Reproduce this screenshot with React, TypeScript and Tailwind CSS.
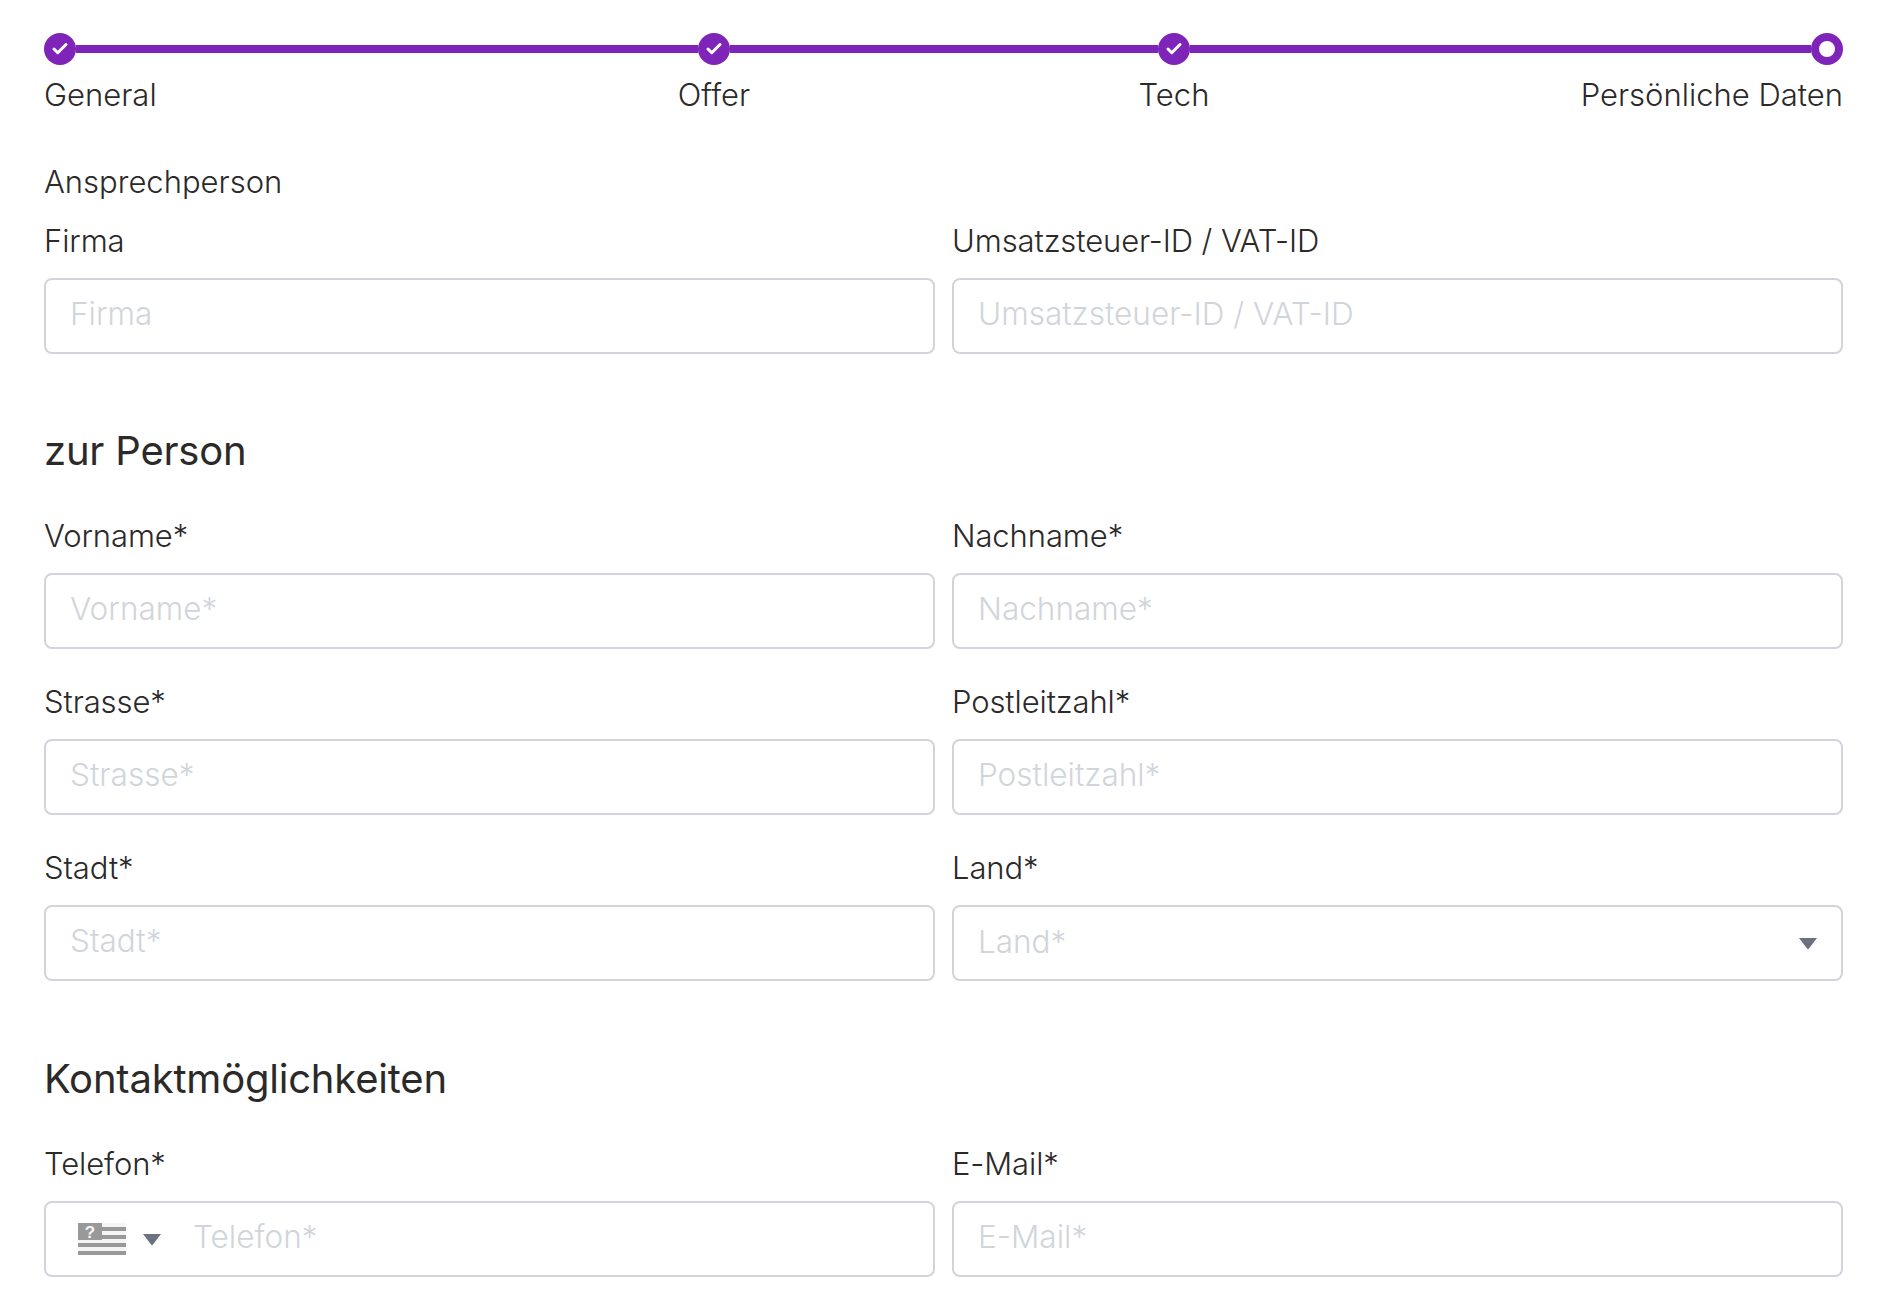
import { Check } from "lucide-react";

function Field({ label, children }: { label: string; children?: React.ReactNode }) {
  return (
    <div className="flex flex-col">
      <label className="h-[36px] text-[31px] leading-[36px] font-light tracking-[-0.1px] text-[#2c2929]">
        {label}
      </label>
      {children ?? <TextInput placeholder={label} />}
    </div>
  );
}

function TextInput({ placeholder }: { placeholder: string }) {
  return (
    <input
      placeholder={placeholder}
      className="mt-[19px] h-[76px] w-full rounded-lg border-2 border-[#d1d5db] px-6 pb-[5px] text-[31.5px] font-light outline-none placeholder:text-[#d1d5db]"
    />
  );
}

function Caret() {
  return (
    <svg width="18" height="11" viewBox="0 0 18 11" className="shrink-0">
      <path d="M0 0h18L10 10.4a1.3 1.3 0 0 1-2 0z" fill="#6b7280" />
    </svg>
  );
}

function UnknownFlag() {
  return (
    <svg width="48" height="32" viewBox="0 0 48 32" className="shrink-0">
      <rect width="48" height="32" fill="#f5f5f5" />
      <rect y="4" width="48" height="4" fill="#999" />
      <rect y="12" width="48" height="4" fill="#999" />
      <rect y="20" width="48" height="4" fill="#999" />
      <rect y="28" width="48" height="4" fill="#999" />
      <rect width="24" height="17" fill="#999" />
      <text x="12" y="14.5" textAnchor="middle" fontSize="17" fontWeight="700" fontFamily="Liberation Sans, sans-serif" fill="#f5f5f5">
        ?
      </text>
    </svg>
  );
}

function StepDot({ active }: { active?: boolean }) {
  if (active) {
    return <div className="size-8 shrink-0 rounded-full border-[8px] border-[#7e24b9] bg-white" />;
  }
  return (
    <div className="flex size-8 shrink-0 items-center justify-center rounded-full bg-[#7e24b9]">
      <Check className="size-[18px] text-white" strokeWidth={4} />
    </div>
  );
}

export default function App() {
  return (
    <div className="h-[1310px] overflow-hidden bg-white pt-[33px] pr-[41px] pl-[44px] font-['Inter',sans-serif]">
      <div className="flex items-center">
        <StepDot />
        <div className="h-2 w-[622px] bg-[#7e24b9]" />
        <StepDot />
        <div className="h-2 w-[428px] bg-[#7e24b9]" />
        <StepDot />
        <div className="h-2 flex-1 bg-[#7e24b9]" />
        <StepDot active />
      </div>
      <div className="mt-[12px] flex h-[36px] text-[31px] leading-[36px] font-light text-[#2c2929]">
        <span className="w-[570px]">General</span>
        <span className="w-[200px] text-center">Offer</span>
        <span className="ml-[260px] w-[200px] text-center">Tech</span>
        <span className="flex-1 text-right">Persönliche Daten</span>
      </div>

      <h3 className="mt-[51px] h-[36px] text-[31px] leading-[36px] font-light text-[#2c2929]">
        Ansprechperson
      </h3>
      <div className="mt-[23px] grid grid-cols-2 gap-x-[17px]">
        <Field label="Firma" />
        <Field label="Umsatzsteuer-ID / VAT-ID" />
      </div>

      <h2 className="mt-[72px] h-[50px] text-[40px] leading-[50px] font-normal tracking-[-0.2px] text-[#2c2929]">
        zur Person
      </h2>
      <div className="mt-[42px] grid grid-cols-2 gap-x-[17px] gap-y-[35px]">
        <Field label="Vorname*" />
        <Field label="Nachname*" />
        <Field label="Strasse*" />
        <Field label="Postleitzahl*" />
        <Field label="Stadt*" />
        <Field label="Land*">
          <div className="mt-[19px] flex h-[76px] items-center justify-between rounded-lg border-2 border-[#d1d5db] pr-[24px] pl-6 text-[31.5px] font-light text-[#d1d5db]">
            <span className="pb-[3px]">Land*</span>
            <Caret />
          </div>
        </Field>
      </div>

      <h2 className="mt-[73px] h-[50px] text-[40px] leading-[50px] font-normal tracking-[-0.2px] text-[#2c2929]">
        Kontaktmöglichkeiten
      </h2>
      <div className="mt-[42px] grid grid-cols-2 gap-x-[17px]">
        <Field label="Telefon*">
          <div className="mt-[19px] flex h-[76px] items-center rounded-lg border-2 border-[#d1d5db] pl-[32px]">
            <UnknownFlag />
            <div className="ml-[17px]">
              <Caret />
            </div>
            <input
              placeholder="Telefon*"
              className="ml-[32px] min-w-0 flex-1 pb-[5px] text-[31.5px] font-light outline-none placeholder:text-[#d1d5db]"
            />
          </div>
        </Field>
        <Field label="E-Mail*" />
      </div>
    </div>
  );
}
